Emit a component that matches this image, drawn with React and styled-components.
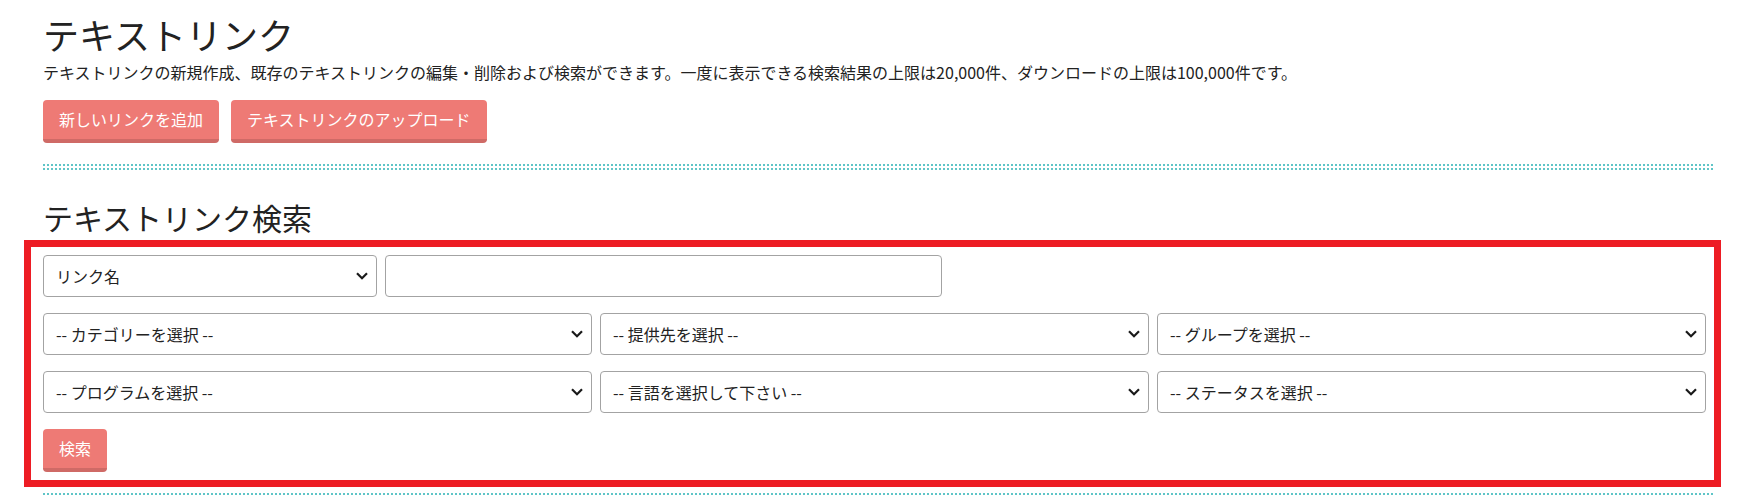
import React from 'react';
import styled, { createGlobalStyle } from 'styled-components';

const GlobalStyle = createGlobalStyle`
  body {
    margin: 0;
    background: #fff;
    color: #222;
    font-family: "Noto Sans CJK JP", "Noto Sans", sans-serif;
  }
`;

const Page = styled.div`
  padding: 0 34px 0 43px;
`;

const Title = styled.h1`
  font-size: 36px;
  font-weight: 400;
  line-height: 40px;
  margin: 14px 0 0;
`;

const Lead = styled.p`
  font-size: 16px;
  line-height: 24px;
  margin: 6px 0 0;
`;

const ButtonRow = styled.div`
  display: flex;
  gap: 12px;
  margin-top: 16px;
`;

const Button = styled.button`
  box-sizing: border-box;
  height: 43px;
  padding: 0 16px;
  border: none;
  border-bottom: 4px solid #cf6a66;
  border-radius: 4px;
  background: #ee7a75;
  color: #fff;
  font-family: inherit;
  font-size: 16px;
  line-height: 39px;
  cursor: pointer;
`;

const Dotted = styled.div`
  height: 6px;
  margin-top: ${(p) => p.$top}px;
  background-image:
    linear-gradient(90deg, #5fc5c7 2px, transparent 2px),
    linear-gradient(90deg, #5fc5c7 2px, transparent 2px);
  background-size: 4px 2px;
  background-position: 0 0, 0 4px;
  background-repeat: repeat-x;
`;

const SubTitle = styled.h2`
  font-size: 30px;
  font-weight: 400;
  line-height: 34px;
  margin: 30px 0 0;
`;

const SearchBox = styled.form`
  margin: 6px -7px 0 -19px;
  border: 7px solid #ed1c24;
  padding: 8px 8px 8px 12px;
  display: flex;
  flex-direction: column;
  gap: 16px;
`;

const FirstRow = styled.div`
  display: flex;
  gap: 8px;
`;

const Grid = styled.div`
  display: grid;
  grid-template-columns: repeat(3, 1fr);
  gap: 16px 8px;
`;

const SelectWrap = styled.div`
  position: relative;
  width: ${(p) => (p.$width ? `${p.$width}px` : 'auto')};
`;

const Select = styled.select`
  appearance: none;
  box-sizing: border-box;
  width: 100%;
  height: 42px;
  padding: 0 30px 0 12px;
  border: 1px solid #a3a3a3;
  border-radius: 4px;
  background: #fff;
  color: #222;
  font-family: inherit;
  font-size: 16px;
`;

const Chevron = styled.svg`
  position: absolute;
  right: 9px;
  top: 17px;
  pointer-events: none;
`;

const TextInput = styled.input`
  box-sizing: border-box;
  width: 557px;
  height: 42px;
  border: 1px solid #a3a3a3;
  border-radius: 4px;
  padding: 0 12px;
  font-family: inherit;
  font-size: 16px;
`;

const SubmitRow = styled.div`
  display: flex;
`;

const Dropdown = ({ label, width }) => (
  <SelectWrap $width={width}>
    <Select defaultValue="">
      <option value="">{label}</option>
    </Select>
    <Chevron width="12" height="8" viewBox="0 0 12 8">
      <path d="M1 1.2 L6 6.2 L11 1.2" fill="none" stroke="#1a1a1a" strokeWidth="2.2" />
    </Chevron>
  </SelectWrap>
);

const filters = [
  '-- カテゴリーを選択 --',
  '-- 提供先を選択 --',
  '-- グループを選択 --',
  '-- プログラムを選択 --',
  '-- 言語を選択して下さい --',
  '-- ステータスを選択 --',
];

export default function App() {
  return (
    <Page>
      <GlobalStyle />
      <Title>テキストリンク</Title>
      <Lead>
        テキストリンクの新規作成、既存のテキストリンクの編集・削除および検索ができます。一度に表示できる検索結果の上限は20,000件、ダウンロードの上限は100,000件です。
      </Lead>
      <ButtonRow>
        <Button>新しいリンクを追加</Button>
        <Button>テキストリンクのアップロード</Button>
      </ButtonRow>
      <Dotted $top={21} />
      <SubTitle>テキストリンク検索</SubTitle>
      <SearchBox onSubmit={(e) => e.preventDefault()}>
        <FirstRow>
          <Dropdown label="リンク名" width={334} />
          <TextInput type="text" />
        </FirstRow>
        <Grid>
          {filters.map((f) => (
            <Dropdown key={f} label={f} />
          ))}
        </Grid>
        <SubmitRow>
          <Button type="submit">検索</Button>
        </SubmitRow>
      </SearchBox>
      <Dotted $top={6} />
    </Page>
  );
}
